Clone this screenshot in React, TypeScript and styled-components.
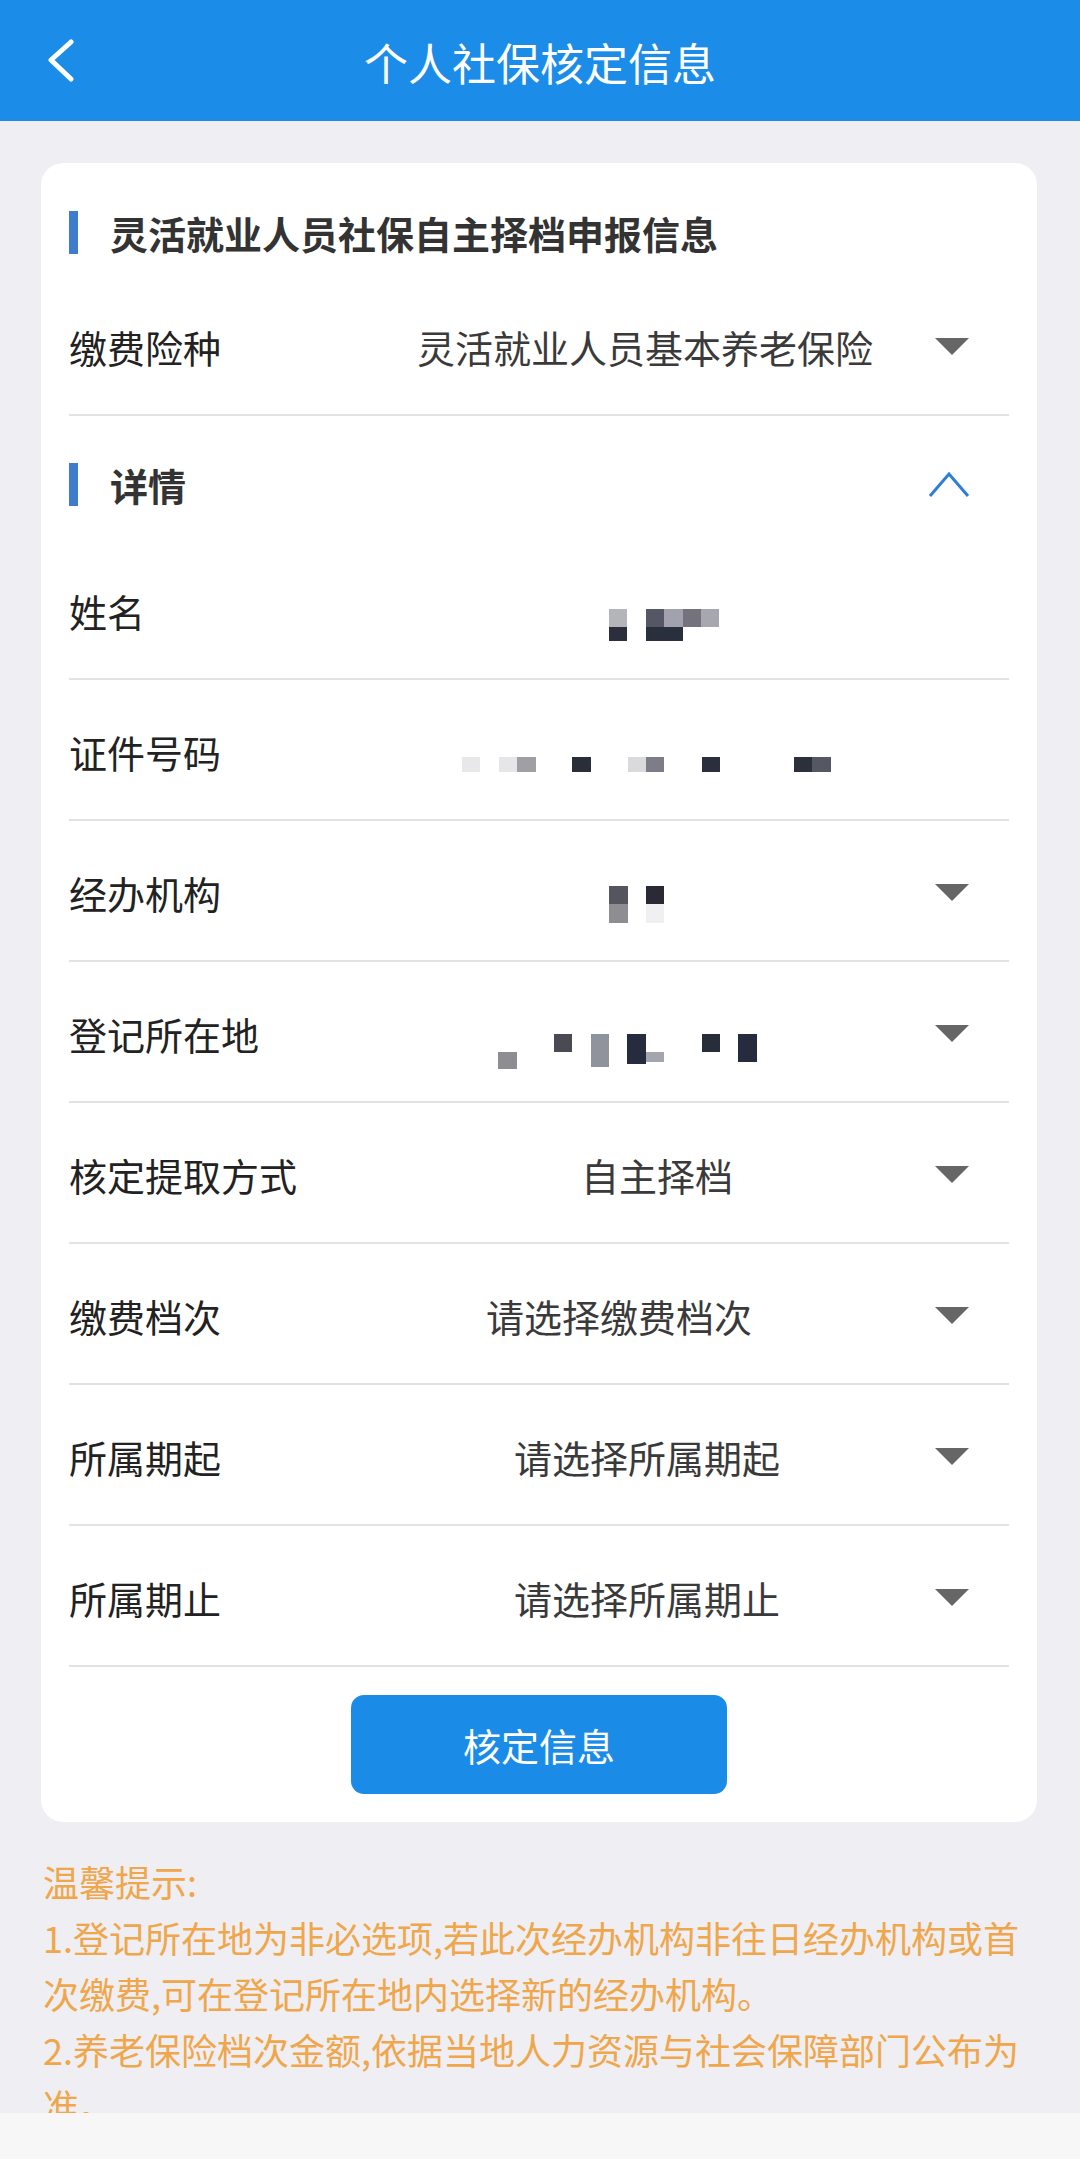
import React from "react";
import styled, { createGlobalStyle } from "styled-components";

const GlobalStyle = createGlobalStyle`
  html, body {
    margin: 0;
    padding: 0;
    background: #eeeef3;
    font-family: "Noto Sans CJK SC", "Noto Sans", sans-serif;
  }
  * { box-sizing: border-box; }
`;

const Page = styled.div`
  min-height: 2159px;
  background: #eeeef3;
`;

const Header = styled.header`
  height: 121px;
  background: #1b8de8;
  display: grid;
  grid-template-columns: 140px 1fr 140px;
  align-items: center;
`;

const BackButton = styled.div`
  padding-left: 47px;
  display: flex;
  align-items: center;
  height: 100%;
`;

const Title = styled.h1`
  margin: 0;
  text-align: center;
  color: #ffffff;
  font-size: 44px;
  font-weight: 400;
  line-height: 1;
  padding-top: 3px;
`;

const Main = styled.main`
  padding: 42px 43px 0 41px;
`;

const Card = styled.section`
  background: #ffffff;
  border-radius: 22px;
  padding: 48px 28px 28px 28px;
`;

const SectionHead = styled.div<{ $top?: number; $bottom?: number }>`
  height: 43px;
  display: grid;
  grid-template-columns: 9px 1fr 75px;
  align-items: center;
  margin-top: ${(p) => p.$top ?? 0}px;
  margin-bottom: ${(p) => p.$bottom ?? 0}px;
`;

const Bar = styled.span`
  display: block;
  width: 9px;
  height: 43px;
  background: #3f7ccb;
`;

const SectionTitle = styled.span`
  padding-left: 32px;
  font-size: 38px;
  font-weight: 700;
  color: #333333;
  line-height: 43px;
  white-space: nowrap;
`;

const ArrowCell = styled.div`
  display: flex;
  align-items: center;
  justify-content: flex-start;
`;

const Row = styled.div<{ $top?: number }>`
  height: 141px;
  padding-top: 4px;
  margin-top: ${(p) => p.$top ?? 0}px;
  border-bottom: 2px solid #e2e2e4;
  display: grid;
  grid-template-columns: 1fr 75px;
  align-items: center;
`;

const Label = styled.span`
  grid-column: 1;
  grid-row: 1;
  font-size: 38px;
  line-height: 1.2;
  color: #222222;
  white-space: nowrap;
`;

const Value = styled.span<{ $left: number }>`
  grid-column: 1;
  grid-row: 1;
  padding-left: ${(p) => p.$left}px;
  font-size: 38px;
  line-height: 1.2;
  color: #3a3a3a;
  white-space: nowrap;
  display: flex;
  align-items: center;
`;

const Triangle = styled.span`
  display: block;
  width: 0;
  height: 0;
  margin-left: 1px;
  border-left: 17px solid transparent;
  border-right: 17px solid transparent;
  border-top: 17px solid #666666;
`;

const ButtonWrap = styled.div`
  display: flex;
  justify-content: center;
  padding-top: 28px;
`;

const PrimaryButton = styled.button`
  width: 376px;
  height: 99px;
  border: none;
  border-radius: 13px;
  background: #1a8ce8;
  color: #ffffff;
  font-family: "Noto Sans CJK SC", "Noto Sans", sans-serif;
  font-size: 38px;
  font-weight: 400;
  cursor: pointer;
`;

const Tips = styled.div`
  padding: 31px 43px 0 43px;
  color: #f0a64a;
  font-size: 36px;
  line-height: 56px;
`;

const TipLine = styled.p`
  margin: 0;
`;

const BottomBar = styled.div`
  position: fixed;
  left: 0;
  right: 0;
  bottom: 0;
  height: 46px;
  background: #f7f7f8;
`;

type Block = [number, number, number, number, string];

const Mosaic: React.FC<{ width: number; blocks: Block[] }> = ({ width, blocks }) => (
  <svg width={width} height={80} viewBox={`0 0 ${width} 80`} style={{ display: "block" }}>
    {blocks.map(([x, y, w, h, c], i) => (
      <rect key={i} x={x} y={y} width={w} height={h} fill={c} />
    ))}
  </svg>
);

const BackIcon = () => (
  <svg width="30" height="44" viewBox="0 0 30 44">
    <polyline
      points="24,3 4,21 24,40"
      fill="none"
      stroke="#ffffff"
      strokeWidth="5"
      strokeLinecap="round"
      strokeLinejoin="round"
    />
  </svg>
);

const ChevronUp = () => (
  <svg width="42" height="26" viewBox="0 0 42 26" style={{ marginLeft: -6 }}>
    <polyline
      points="2,24 21,2 40,24"
      fill="none"
      stroke="#2d7fd6"
      strokeWidth="3"
      strokeLinejoin="miter"
    />
  </svg>
);

const nameBlocks: Block[] = [
  [0, 38, 18, 18, "#b4b5bb"],
  [0, 56, 18, 14, "#2b2f3d"],
  [37, 38, 18, 18, "#555766"],
  [55, 38, 19, 18, "#a1a2ae"],
  [74, 38, 18, 18, "#74737d"],
  [92, 38, 18, 18, "#a7a7b0"],
  [37, 56, 37, 14, "#2a2f3e"],
];

const idBlocks: Block[] = [
  [0, 45, 18, 15, "#e8e8ea"],
  [37, 45, 18, 15, "#e6e6e8"],
  [55, 45, 19, 15, "#a0a0a4"],
  [110, 45, 19, 15, "#2a2e38"],
  [166, 45, 18, 15, "#dadadc"],
  [184, 45, 18, 15, "#7d7d88"],
  [240, 45, 18, 15, "#2b2e3f"],
  [332, 45, 18, 15, "#2b303b"],
  [350, 45, 19, 15, "#555863"],
];

const agencyBlocks: Block[] = [
  [0, 33, 19, 18, "#555560"],
  [0, 51, 19, 19, "#8e8e92"],
  [37, 33, 18, 18, "#2a2a35"],
  [37, 51, 18, 19, "#f0f0f2"],
];

const placeBlocks: Block[] = [
  [0, 58, 19, 17, "#8d8d92"],
  [56, 40, 18, 18, "#4a4b52"],
  [93, 40, 18, 33, "#8f949c"],
  [129, 40, 19, 30, "#262c3d"],
  [148, 58, 18, 10, "#a3a6ad"],
  [204, 40, 18, 18, "#282d3a"],
  [240, 40, 19, 28, "#262b3d"],
];

type Field = {
  label: string;
  left: number;
  text?: string;
  mosaic?: { width: number; blocks: Block[] };
  select: boolean;
};

const fields: Field[] = [
  { label: "姓名", left: 540, mosaic: { width: 112, blocks: nameBlocks }, select: false },
  { label: "证件号码", left: 393, mosaic: { width: 370, blocks: idBlocks }, select: false },
  { label: "经办机构", left: 540, mosaic: { width: 56, blocks: agencyBlocks }, select: true },
  { label: "登记所在地", left: 429, mosaic: { width: 260, blocks: placeBlocks }, select: true },
  { label: "核定提取方式", left: 512, text: "自主择档", select: true },
  { label: "缴费档次", left: 417, text: "请选择缴费档次", select: true },
  { label: "所属期起", left: 445, text: "请选择所属期起", select: true },
  { label: "所属期止", left: 445, text: "请选择所属期止", select: true },
];

export default function App() {
  return (
    <Page>
      <GlobalStyle />
      <Header>
        <BackButton>
          <BackIcon />
        </BackButton>
        <Title>个人社保核定信息</Title>
        <div />
      </Header>
      <Main>
        <Card>
          <SectionHead>
            <Bar />
            <SectionTitle>灵活就业人员社保自主择档申报信息</SectionTitle>
            <div />
          </SectionHead>
          <Row $top={21}>
            <Label>缴费险种</Label>
            <Value $left={348}>灵活就业人员基本养老保险</Value>
            <ArrowCell>
              <Triangle />
            </ArrowCell>
          </Row>
          <SectionHead $top={47} $bottom={33}>
            <Bar />
            <SectionTitle>详情</SectionTitle>
            <ArrowCell>
              <ChevronUp />
            </ArrowCell>
          </SectionHead>
          {fields.map((f) => (
            <Row key={f.label}>
              <Label>{f.label}</Label>
              <Value $left={f.left}>
                {f.mosaic ? <Mosaic width={f.mosaic.width} blocks={f.mosaic.blocks} /> : f.text}
              </Value>
              <ArrowCell>{f.select ? <Triangle /> : null}</ArrowCell>
            </Row>
          ))}
          <ButtonWrap>
            <PrimaryButton>核定信息</PrimaryButton>
          </ButtonWrap>
        </Card>
      </Main>
      <Tips>
        <TipLine>温馨提示:</TipLine>
        <TipLine>
          1.登记所在地为非必选项,若此次经办机构非往日经办机构或首次缴费,可在登记所在地内选择新的经办机构。
        </TipLine>
        <TipLine>
          2.养老保险档次金额,依据当地人力资源与社会保障部门公布为准。
        </TipLine>
      </Tips>
      <BottomBar />
    </Page>
  );
}
